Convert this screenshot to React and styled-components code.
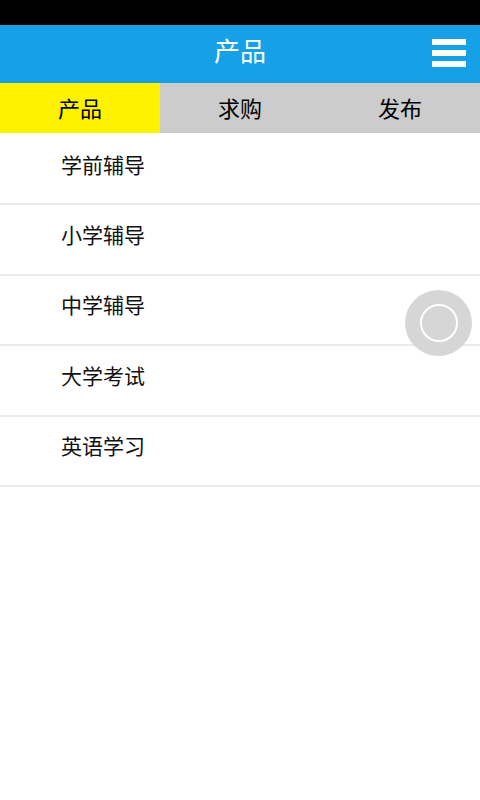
import React from "react";
import styled, { createGlobalStyle } from "styled-components";

const GlobalStyle = createGlobalStyle`
  html, body {
    margin: 0;
    padding: 0;
    background: #ffffff;
    font-family: "Noto Sans CJK SC", "Noto Sans", sans-serif;
  }
`;

const Screen = styled.div`
  position: relative;
  width: 480px;
  height: 800px;
  background: #ffffff;
  overflow: hidden;
`;

const StatusBar = styled.div`
  height: 25px;
  background: #000000;
`;

const Header = styled.div`
  position: relative;
  height: 58px;
  box-sizing: border-box;
  padding-bottom: 10px;
  background: #16a1e7;
  display: flex;
  align-items: center;
  justify-content: center;
  color: #ffffff;
  font-size: 26px;
`;

const MenuButton = styled.div`
  position: absolute;
  right: 14px;
  top: 14px;
  width: 34px;
  display: flex;
  flex-direction: column;
  gap: 5px;
  span {
    display: block;
    height: 6px;
    background: #ffffff;
  }
`;

const Tabs = styled.div`
  display: grid;
  grid-template-columns: repeat(3, 1fr);
  height: 50px;
`;

const Tab = styled.div`
  display: flex;
  align-items: center;
  justify-content: center;
  padding-bottom: 2px;
  font-size: 22px;
  color: #000000;
  background: ${(p) => (p.$active ? "#fff200" : "#cccccc")};
`;

const List = styled.div`
  display: flex;
  flex-direction: column;
  padding-top: 2px;
`;

const Item = styled.div`
  height: 68.4px;
  box-sizing: content-box;
  display: flex;
  align-items: center;
  padding-left: 61px;
  font-size: 21px;
  color: #111111;
  border-bottom: 2px solid #ebebeb;
  line-height: 1;
  & > span {
    margin-bottom: 10px;
  }
`;

const Floating = styled.div`
  position: absolute;
  left: 405px;
  top: 290px;
  width: 67px;
  height: 66px;
  border-radius: 50%;
  background: #d6d6d6;
  display: flex;
  align-items: center;
  justify-content: center;
  &::after {
    content: "";
    width: 34px;
    height: 34px;
    border-radius: 50%;
    border: 2px solid #ffffff;
  }
`;

const items = ["学前辅导", "小学辅导", "中学辅导", "大学考试", "英语学习"];

export default function App() {
  return (
    <Screen>
      <GlobalStyle />
      <StatusBar />
      <Header>
        产品
        <MenuButton>
          <span />
          <span />
          <span />
        </MenuButton>
      </Header>
      <Tabs>
        <Tab $active>产品</Tab>
        <Tab>求购</Tab>
        <Tab>发布</Tab>
      </Tabs>
      <List>
        {items.map((t) => (
          <Item key={t}>
            <span>{t}</span>
          </Item>
        ))}
      </List>
      <Floating />
    </Screen>
  );
}
